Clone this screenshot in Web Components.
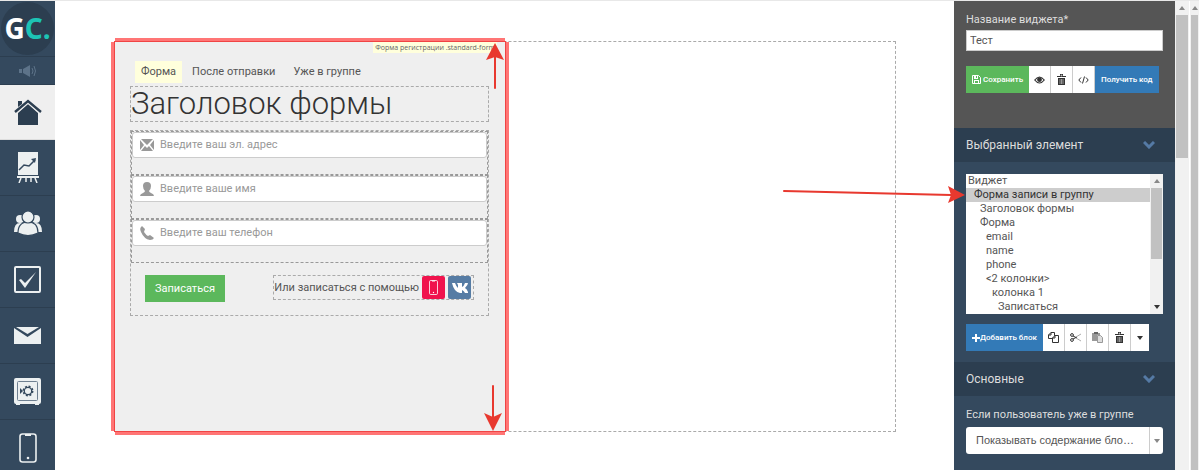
<!DOCTYPE html>
<html lang="ru">
<head>
<meta charset="utf-8">
<title>Виджет</title>
<style>
    body {
        margin: 0;
        overflow: hidden;
        background: #fff;
        color: #555;
        font: 11px/14px Roboto, "Liberation Sans", sans-serif;
    }
</style>
</head>
<body>
<widget-editor></widget-editor>

<script>
// inner markup of the icons, drawn with currentColor
const ICONS = {
    megaphone: ['0 0 18 12', '<path d="M0 4h3v4H0zM4 4l7-4v12L4 8z"/><path d="M13 3q2 3 0 6M15 1q3 5 0 10" fill="none" stroke="currentColor"/>'],
    home: ['0 0 28 26', '<path d="M4 14 14 5l10 9v12H4z"/><path d="M1 13 14 2l13 11" fill="none" stroke="#efefef" stroke-width="4.500"/><path d="M1 13 14 2l13 11" fill="none" stroke="currentColor" stroke-width="2.400"/><path d="M4 2h4v3L4 8z"/>'],
    chart: ['0 0 22 31', '<path d="M1 0h20v23H1zM0 24h22v2H0z"/><path d="M4 26 2 31M9 26v4M14 26v4M18 26l2 5" stroke="currentColor" stroke-width="1.5"/><path d="m2 18 5-5 5 1 6-6" fill="none" stroke="#34495e" stroke-width="1.5"/><path d="m14 7 5-1-1 5z" fill="#34495e"/>'],
    users: ['0 0 28 25', '<circle cx="6" cy="8" r="4"/><circle cx="22" cy="8" r="4"/><path d="M0 21q0-9 6-9t7 9zM15 21q1-9 7-9t6 9z"/><g stroke="#34495e" stroke-width="1.2"><path d="M4 22q0-11 10-11t10 11q-10 5-20 0z"/><circle cx="14" cy="6" r="6"/></g>'],
    check: ['0 0 27 27', '<rect x="1" y="1" width="25" height="25" rx="1" fill="none" stroke="currentColor" stroke-width="2"/><path d="m5 14 2-1 4 4L22 6 11 22z"/>'],
    mail: ['0 0 27 17', '<path d="M0 1v16h27V1L13.500 10z"/><path d="M2 0h23l-11.500 7z"/>'],
    safe: ['0 0 27 27', '<path d="M2 0h23q2 0 2 2v22q0 2-2 2v1h-4v-1H6v1H2v-1q-2 0-2-2V2q0-2 2-2z"/><rect x="3.500" y="3.500" width="20" height="19" rx="1" fill="none" stroke="#6f8091"/><circle cx="14" cy="13" r="3.700" fill="none" stroke="#34495e" stroke-width="1.300"/><circle cx="14" cy="13" r="4.700" fill="none" stroke="#34495e" stroke-width="1.500" stroke-dasharray="2 1.700"/><path d="m6 10 3 3-3 3z" fill="#34495e"/>'],
    phone: ['0 0 18 30', '<rect x="1" y="1" width="16" height="28" rx="2.500" fill="none" stroke="currentColor" stroke-width="1.600"/><path d="M6 1h6v2H6z"/><circle cx="9" cy="25" r="1.300"/>'],
    envelope: ['0 0 14 12', '<path d="M1 0h12L7 6zM0 1l4 5-4 5zM14 1l-4 5 4 5zM1 12l4-5 2 2 2-2 4 5z"/>'],
    person: ['0 0 14 14', '<path d="M7 0q4 0 4 4 0 3-2 5 0 1 2 2 3 1 3 3H0q0-2 3-3 2-1 2-2-2-2-2-5 0-4 4-4z"/>'],
    handset: ['0 0 14 14', '<path d="M2 0 5 3 4 6q2 3 4 4l2-1 4 3q-1 2-4 2Q4 13 1 6-1 2 2 0z"/>'],
    vk: ['0 0 16 10', '<path d="M0 0h3q1 3 3 5V2L5 0h5v4q2-1 3-4h3q0 2-3 5 2 1 3 4v1h-3q-1-2-3-3v3H8Q2 9 0 0z"/>'],
    save: ['0 0 9 9', '<path d="M.5.5h6l2 2v6h-8z" fill="none" stroke="currentColor"/><path d="M2 1h4v3H2zM2 5h5v3H2z"/><path d="M4 1h1v2H4zM3 6h3v2H3z" fill="#5cb85c"/>'],
    eye: ['0 0 11 8', '<path d="M0 4q5.500-7 11 0-5.500 7-11 0z"/><path d="M1.500 4q4-5 8 0-4 5-8 0z" fill="#fff"/><circle cx="5.500" cy="3.700" r="2.400"/>'],
    trash: ['0 0 9 11', '<path d="M0 2h3V0h3v2h3v1H0zM1 4h7v7H1z"/><path d="M4 1h1v1H4zM3 5v5M4.500 5v5M6 5v5" stroke="#fff" stroke-width=".5"/>'],
    code: ['0 0 11 8', '<path d="M3 1.500.8 4 3 6.500M8 1.500 10.200 4 8 6.500M6.500.5l-2 7" fill="none" stroke="currentColor"/>'],
    plus: ['0 0 8 8', '<path d="M3 0h2v3h3v2H5v3H3V5H0V3h3z"/>'],
    copy: ['0 0 11 11', '<path d="M3 .5h3.500v6h-6V3z" fill="#fff" stroke="currentColor"/><path d="M3 .5V3H.5" fill="none" stroke="currentColor"/><path d="M7 3.500h3.500v7h-6V6z" fill="#fff" stroke="currentColor"/><path d="M7 3.500V6H4.500" fill="none" stroke="currentColor"/>'],
    cut: ['0 0 11 9', '<circle cx="2" cy="2" r="1.400" fill="none" stroke="currentColor"/><circle cx="2" cy="7" r="1.400" fill="none" stroke="currentColor"/><path d="m3 3 4 2M3 6l4-2" stroke="currentColor"/><path d="m6 4 5-3M6 5l5 3" stroke="#aaa"/>'],
    paste: ['0 0 11 11', '<path d="M0 1h8v2H5v6H0z" fill="#999"/><path d="M2 0h4v2H2z" fill="#666"/><path d="M5.500 3.500h3l2 2v5h-5z" fill="#ddd" stroke="#999"/>'],
    chevron: ['0 0 12 8', '<path d="m1 1 5 5 5-5" fill="none" stroke="currentColor" stroke-width="3"/>'],
    caret: ['0 0 6 4', '<path d="M0 0h6L3 4z"/>'],
    up: ['0 0 6 4', '<path d="M0 4h6L3 0z"/>']
};

function define(name, html, setup) {
    customElements.define(name, class extends HTMLElement {
        constructor() {
            super();
            this.attachShadow({ mode: 'open' });
            this.shadowRoot.innerHTML = html;
        }

        connectedCallback() {
            if (setup) setup(this, this.shadowRoot);
        }
    });
}

define('ui-icon', `
    <style>
        :host { display: inline-block; flex: none; }
        svg { display: block; fill: currentColor; }
    </style>
    <svg aria-hidden="true"></svg>
`, (host, root) => {
    const [viewBox, shapes] = ICONS[host.getAttribute('name')];
    const svg = root.querySelector('svg');
    const [, , width, height] = viewBox.split(' ');
    svg.setAttribute('viewBox', viewBox);
    svg.setAttribute('width', width);
    svg.setAttribute('height', height);
    svg.innerHTML = shapes;
});

define('nav-item', `
    <style>
        :host { display: block; height: 56px; box-sizing: border-box; border-bottom: 1px solid #2c3e50; color: #ecf0f1; }
        :host([active]) { height: 55px; border-bottom-color: #ddd; background: #efefef; color: #2c3e50; }
        :host([small]) { height: 28px; color: #5d7389; }
        a { display: flex; height: 100%; align-items: center; justify-content: center; color: inherit; }
    </style>
    <a href="#"></a>
`, (host, root) => {
    const link = root.querySelector('a');
    link.setAttribute('aria-label', host.getAttribute('label'));
    link.innerHTML = `<ui-icon name="${host.getAttribute('icon')}"></ui-icon>`;
});

define('side-nav', `
    <style>
        :host { display: block; background: #34495e; overflow: hidden; }
        .logo {
            display: flex;
            height: 56px;
            box-sizing: border-box;
            align-items: center;
            justify-content: center;
            border-bottom: 1px solid #2c3e50;
            text-decoration: none;
        }
        .logo span {
            width: 53px;
            height: 53px;
            border-radius: 50%;
            background: #2c3e50;
            color: #fff;
            font: bold 28px/53px "Noto Sans", sans-serif;
            text-align: center;
        }
        b { color: #1dc4b5; font-weight: inherit; }
    </style>
    <a class="logo" href="#"><span>G<b>C.</b></span></a>
    <nav>
        <nav-item small icon="megaphone" label="Новости"></nav-item>
        <nav-item active icon="home" label="Главная"></nav-item>
        <nav-item icon="chart" label="Статистика"></nav-item>
        <nav-item icon="users" label="Пользователи"></nav-item>
        <nav-item icon="check" label="Задачи"></nav-item>
        <nav-item icon="mail" label="Сообщения"></nav-item>
        <nav-item icon="safe" label="Продажи"></nav-item>
        <nav-item icon="phone" label="Телефон"></nav-item>
    </nav>
`);

define('form-field', `
    <style>
        :host { display: block; padding-bottom: 16px; border: 1px dashed #999; }
        label {
            display: flex;
            align-items: center;
            gap: 6px;
            height: 26px;
            box-sizing: border-box;
            padding-left: 7px;
            border: 1px solid #ccc;
            border-radius: 3px;
            background: #fff;
            color: #999;
        }
        input { flex: 1; min-width: 0; border: 0; padding: 0; outline: 0; background: none; font: inherit; color: #555; }
        input::placeholder { color: #999; }
    </style>
    <label><slot></slot><input></label>
`, (host, root) => {
    const input = root.querySelector('input');
    input.placeholder = host.getAttribute('placeholder');
    input.setAttribute('aria-label', input.placeholder);
});

define('form-widget', `
    <style>
        :host {
            display: block;
            position: relative;
            padding: 19px 16px 19px 15px;
            background: #efefef;
            outline: 1px solid #f04444;
            box-shadow: 0 -4px #ff7575, 0 4px #ff7575, -4px 0 #ff7575, 4px 0 #ff7575;
        }
        .tip {
            position: absolute;
            top: 0;
            right: 8px;
            padding: 0 2px;
            background: #ffffdc;
            color: #666;
            font: 7px/11px "Open Sans", sans-serif;
        }
        .tabs { display: flex; gap: 2px; padding-left: 5px; margin-bottom: 3px; }
        button { border: 0; font: inherit; color: inherit; }
        .tabs button { padding: 0 8px; background: none; line-height: 22px; }
        .tabs .active { padding: 0 6px; background: #ffffdc; }
        h1 { margin: 0 0 8px; border: 1px dashed #aaa; color: #333; font-size: 31px; font-weight: 300; line-height: 34px; }
        form { border: 1px dashed #aaa; }
        .bottom { display: flex; justify-content: space-between; align-items: flex-start; padding: 12px 14px 13px; }
        .submit { height: 27px; padding: 0 10px; background: #5cb85c; color: #fff; }
        .social { display: flex; align-items: center; gap: 3px; padding-right: 2px; border: 1px dashed #aaa; }
        .social a { display: flex; width: 23px; height: 23px; align-items: center; justify-content: center; border-radius: 2px; color: #fff; }
        .sms { background: #f0134d; }
        .vk { background: #567ca4; }
        .sms ui-icon { zoom: .5; }
    </style>
    <div class="tip">Форма регистрации .standard-form</div>
    <div class="tabs">
        <button class="active">Форма</button>
        <button>После отправки</button>
        <button>Уже в группе</button>
    </div>
    <h1>Заголовок формы</h1>
    <form>
        <form-field placeholder="Введите ваш эл. адрес"><ui-icon name="envelope"></ui-icon></form-field>
        <form-field placeholder="Введите ваше имя"><ui-icon name="person"></ui-icon></form-field>
        <form-field placeholder="Введите ваш телефон"><ui-icon name="handset"></ui-icon></form-field>
        <div class="bottom">
            <button class="submit" type="button">Записаться</button>
            <div class="social">
                <span>Или записаться с помощью</span>
                <a class="sms" href="#" aria-label="Телефон"><ui-icon name="phone"></ui-icon></a>
                <a class="vk" href="#" aria-label="ВКонтакте"><ui-icon name="vk"></ui-icon></a>
            </div>
        </div>
    </form>
`);

define('scroll-track', `
    <style>
        :host { display: flex; flex-direction: column; align-items: center; background: #f1f1f1; color: #888; }
        ui-icon { padding: 5px 0; }
        .thumb { width: calc(100% - 2px); height: var(--thumb, 100%); background: #c1c1c1; }
        .end { display: none; margin-top: auto; color: #333; }
        :host([both]) .end { display: block; }
    </style>
    <ui-icon name="up"></ui-icon>
    <div class="thumb"></div>
    <ui-icon class="end" name="caret"></ui-icon>
`);

define('button-bar', `
    <style>
        :host { display: flex; height: 27px; }
        ::slotted(button) {
            display: flex;
            align-items: center;
            justify-content: center;
            gap: 2px;
            min-width: 22px;
            padding: 0 5px;
            border: 0;
            border-right: 1px solid #ccc;
            background: #fff;
            color: #333;
            font: 500 8px/14px Roboto, sans-serif;
            white-space: nowrap;
        }
        ::slotted(.save) { padding: 0 6px; border: 0; background: #5cb85c; color: #fff; }
        ::slotted(.blue) { padding: 0 6px; border: 0; background: #337ab7; color: #fff; gap: 0; }
        ::slotted(:last-child) { min-width: 18px; border: 0; }
    </style>
    <slot></slot>
`);

define('panel-section', `
    <style>
        :host { display: block; color: #ddd; }
        header {
            display: flex;
            justify-content: space-between;
            align-items: center;
            padding: 10px 20px 10px 12px;
            background: #2c3e50;
            font-size: 12px;
        }
        ui-icon { color: #557aa5; }
        .body { padding: 12px 12px 11px; }
    </style>
    <header><slot name="title"></slot><ui-icon name="chevron"></ui-icon></header>
    <div class="body"><slot></slot></div>
`);

define('settings-panel', `
    <style>
        :host { display: block; background: #34495e; color: #ddd; overflow: hidden; }
        label { display: block; }
        .top { padding: 12px 12px 35px; background: #555; }
        .name { display: block; width: 100%; height: 21px; box-sizing: border-box; margin: 3px 0 15px; padding: 0 3px; border: 1px solid #ccc; background: #fff; color: #555; font: inherit; }
        .tree { display: flex; height: 140px; margin-bottom: 10px; background: #fff; }
        .tree select { flex: 1; min-width: 0; height: 140px; padding: 0; border: 0; border-radius: 0; outline: 0; overflow: hidden; background: #fff; color: #555; font: inherit; scrollbar-width: none; }
        .tree option { min-height: 14px; padding: 0 0 0 calc(2px + var(--depth, 0) * 6px); line-height: 14px; color: #555; }
        .tree option:checked { background: linear-gradient(#cdcdcd, #cdcdcd); color: #333; }
        .tree scroll-track { width: 13px; --thumb: 71px; }
        .drop { display: flex; height: 27px; margin-top: 5px; border-radius: 3px; background: #fff; color: #888; }
        .drop select { flex: 1; min-width: 0; padding: 0 0 0 10px; border: 0; outline: 0; appearance: none; background: none; color: #555; font: 11px/27px "Liberation Sans", sans-serif; }
        .drop span { display: flex; width: 13px; align-items: center; justify-content: center; border-left: 1px solid #ccc; }
    </style>
    <div class="top">
        <label for="name">Название виджета*</label>
        <input class="name" id="name" value="Тест">
        <button-bar>
            <button class="save"><ui-icon name="save"></ui-icon>Сохранить</button>
            <button aria-label="Просмотр"><ui-icon name="eye"></ui-icon></button>
            <button aria-label="Удалить"><ui-icon name="trash"></ui-icon></button>
            <button aria-label="Исходный код"><ui-icon name="code"></ui-icon></button>
            <button class="blue">Получить код</button>
        </button-bar>
    </div>
    <panel-section>
        <span slot="title">Выбранный элемент</span>
        <div class="tree">
            <select size="10" aria-label="Выбранный элемент">
                <option>Виджет</option>
                <option style="--depth: 1" selected>Форма записи в группу</option>
                <option style="--depth: 2">Заголовок формы</option>
                <option style="--depth: 2">Форма</option>
                <option style="--depth: 3">email</option>
                <option style="--depth: 3">name</option>
                <option style="--depth: 3">phone</option>
                <option style="--depth: 3">&lt;2 колонки&gt;</option>
                <option style="--depth: 4">колонка 1</option>
                <option style="--depth: 5">Записаться</option>
            </select>
            <scroll-track both></scroll-track>
        </div>
        <button-bar>
            <button class="blue"><ui-icon name="plus"></ui-icon>Добавить блок</button>
            <button aria-label="Копировать"><ui-icon name="copy"></ui-icon></button>
            <button aria-label="Вырезать"><ui-icon name="cut"></ui-icon></button>
            <button aria-label="Вставить"><ui-icon name="paste"></ui-icon></button>
            <button aria-label="Удалить блок"><ui-icon name="trash"></ui-icon></button>
            <button aria-label="Ещё"><ui-icon name="caret"></ui-icon></button>
        </button-bar>
    </panel-section>
    <panel-section>
        <span slot="title">Основные</span>
        <label for="member">Если пользователь уже в группе</label>
        <div class="drop">
            <select id="member"><option>Показывать содержание бло…</option></select>
            <span><ui-icon name="caret"></ui-icon></span>
        </div>
    </panel-section>
`);

define('widget-editor', `
    <style>
        :host {
            display: grid;
            grid-template-columns: 55px 1fr 221px 14px 10px;
            height: 100vh;
            box-sizing: border-box;
            border-top: 1px solid #e8e8e8;
            overflow: hidden;
        }
        main { position: relative; padding: 40px 58px 38px 59px; }
        .columns { display: grid; grid-template-columns: 1fr 1fr; height: 100%; box-sizing: border-box; border: 1px dashed #aaa; }
        .inner { --thumb: 143px; }
        .outer { border-left: 1px solid #fff; }
        .arrow { position: absolute; overflow: visible; fill: #e8392f; stroke: #e8392f; }
        .arrow path { stroke: none; }
        .arrow line { stroke-width: 2; stroke-linecap: round; }
    </style>
    <side-nav></side-nav>
    <main>
        <div class="columns"><form-widget></form-widget></div>
        <svg class="arrow" style="left: 431px; top: 42px" width="18" height="46"><line x1="9" y1="14" x2="9" y2="45"/><path d="M9 0 18 17 9 14 0 17z"/></svg>
        <svg class="arrow" style="left: 429px; top: 384px" width="18" height="46"><line x1="9" y1="1" x2="9" y2="32"/><path d="M9 46 0 28l9 4 9-4z"/></svg>
        <svg class="arrow" style="right: -11px; top: 184px" width="182" height="20"><line x1="1" y1="6" x2="168" y2="10"/><path d="m182 10-17 8 3-8-3-9z"/></svg>
    </main>
    <settings-panel></settings-panel>
    <scroll-track class="inner"></scroll-track>
    <scroll-track class="outer"></scroll-track>
`);
</script>
</body>
</html>
